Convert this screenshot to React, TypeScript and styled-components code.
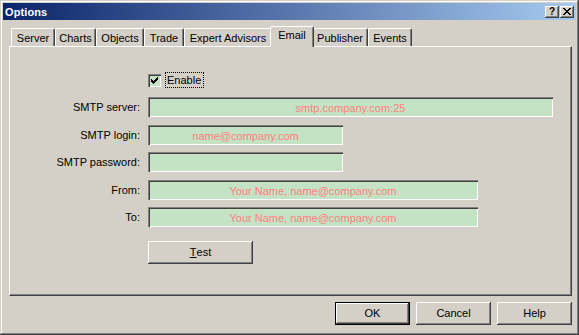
import { Fragment } from 'react';
import styled, { createGlobalStyle } from 'styled-components';

const FACE = '#d4d0c8';
const SHADOW = '#808080';
const DARK = '#404040';
const FIELD = '#c4e2c4';
const HINT = '#ff8080';

const GlobalStyle = createGlobalStyle`
  html, body {
    margin: 0;
    padding: 0;
    background: ${FACE};
  }
  body {
    font-family: 'Liberation Sans', Arial, sans-serif;
    font-size: 11px;
    color: #000;
  }
`;

const ScWindow = styled.div`
  width: 579px;
  height: 335px;
  box-sizing: border-box;
  padding: 3px;
  background: ${FACE};
  box-shadow: inset -1px -1px ${DARK}, inset 1px 1px ${FACE}, inset -2px -2px ${SHADOW},
    inset 2px 2px #fff;
  display: flex;
  flex-direction: column;
`;

const ScTitleBar = styled.div`
  height: 17px;
  flex: 0 0 auto;
  display: flex;
  align-items: center;
  padding: 0 2px 0 2px;
  background: linear-gradient(to right, #0a246a, #a6caf0);
`;

const ScTitle = styled.span`
  flex: 1;
  color: #fff;
  font-weight: bold;
  font-size: 11px;
  letter-spacing: 0.1px;
`;

const ScCaptionButtons = styled.div`
  display: flex;
  gap: 1px;
`;

const ScCaptionBtn = styled.div`
  width: 14px;
  height: 12px;
  box-sizing: border-box;
  background: ${FACE};
  box-shadow: inset -1px -1px ${DARK}, inset 1px 1px #fff, inset -2px -2px ${SHADOW};
  display: flex;
  align-items: center;
  justify-content: center;
  font-weight: bold;
  font-size: 10px;
  line-height: 1;

  svg {
    display: block;
    shape-rendering: crispEdges;
  }
`;

const ScBody = styled.div`
  flex: 1;
  display: flex;
  flex-direction: column;
  padding: 6px 4px 0 6px;
`;

const ScTabStrip = styled.div`
  display: flex;
  align-items: flex-end;
  height: 20px;
  padding-left: 2px;
  position: relative;
  z-index: 1;
`;

const ScTab = styled.div<{ $w: number; $active?: boolean }>`
  box-sizing: border-box;
  width: ${(p) => (p.$active ? p.$w + 4 : p.$w)}px;
  height: ${(p) => (p.$active ? 21 : 18)}px;
  margin: ${(p) => (p.$active ? '0 -2px -1px -2px' : '0')};
  position: relative;
  z-index: ${(p) => (p.$active ? 2 : 1)};
  background: ${FACE};
  border-top: 1px solid #fff;
  border-left: 1px solid #fff;
  border-right: 1px solid ${DARK};
  border-radius: 2px 2px 0 0;
  box-shadow: inset -1px 0 ${SHADOW};
  display: flex;
  justify-content: center;
  padding-top: ${(p) => (p.$active ? 2 : 3)}px;
  white-space: nowrap;
`;

const ScPanel = styled.div`
  height: 250px;
  box-sizing: border-box;
  border-top: 1px solid #fff;
  border-left: 1px solid #fff;
  border-right: 1px solid ${DARK};
  border-bottom: 1px solid ${DARK};
  box-shadow: inset -1px -1px ${SHADOW};
  padding-top: 25px;
  display: flex;
  flex-direction: column;
`;

const ScGrid = styled.div<{ $gap?: number; $top?: number }>`
  display: grid;
  grid-template-columns: 130px auto;
  column-gap: 8px;
  row-gap: ${(p) => p.$gap ?? 0}px;
  align-items: center;
  justify-items: start;
  margin-top: ${(p) => p.$top ?? 0}px;
`;

const ScLabel = styled.label`
  justify-self: end;
  white-space: nowrap;
`;

const ScCheckRow = styled.label`
  grid-column: 2;
  display: flex;
  align-items: center;
  gap: 4px;
  height: 16px;
`;

const ScCheckBox = styled.span`
  width: 13px;
  height: 13px;
  box-sizing: border-box;
  background: ${FIELD};
  box-shadow: inset 1px 1px ${SHADOW}, inset 2px 2px ${DARK}, inset -1px -1px #fff;
  display: flex;
  align-items: center;
  justify-content: center;

  svg {
    display: block;
    shape-rendering: crispEdges;
  }
`;

const ScFocusText = styled.span`
  border: 1px dotted #000;
  padding: 1px 2px 1px 1px;
  line-height: 12px;
`;

const ScField = styled.input<{ $w: number }>`
  width: ${(p) => p.$w}px;
  height: 20px;
  box-sizing: border-box;
  border: none;
  outline: none;
  padding: 2px 2px 0 2px;
  margin: 0;
  background: ${FIELD};
  box-shadow: inset 1px 1px ${SHADOW}, inset 2px 2px ${DARK}, inset -1px -1px #fff;
  font-family: 'Liberation Sans', Arial, sans-serif;
  font-size: 11px;
  text-align: center;
  color: ${HINT};

  &::placeholder {
    color: ${HINT};
    opacity: 1;
  }
`;

const ScButton = styled.button<{ $w: number; $default?: boolean }>`
  width: ${(p) => p.$w}px;
  height: 23px;
  box-sizing: border-box;
  margin: 0;
  padding: 0;
  background: ${FACE};
  border: ${(p) => (p.$default ? '1px solid #000' : 'none')};
  box-shadow: inset -1px -1px ${DARK}, inset 1px 1px #fff, inset -2px -2px ${SHADOW};
  font-family: 'Liberation Sans', Arial, sans-serif;
  font-size: 11px;
  color: #000;
  display: flex;
  align-items: center;
  justify-content: center;
  padding-bottom: 1px;
`;

const ScFooter = styled.div`
  display: flex;
  justify-content: flex-end;
  gap: 6px;
  margin-top: 6px;
`;

const tabs = [
  { label: 'Server', w: 44 },
  { label: 'Charts', w: 41 },
  { label: 'Objects', w: 48 },
  { label: 'Trade', w: 40 },
  { label: 'Expert Advisors', w: 88 },
  { label: 'Email', w: 40, active: true },
  { label: 'Publisher', w: 56 },
  { label: 'Events', w: 44 },
];

const fields = [
  { label: 'SMTP server:', hint: 'smtp.company.com:25', w: 405 },
  { label: 'SMTP login:', hint: 'name@company.com', w: 195 },
  { label: 'SMTP password:', hint: '', w: 195 },
  { label: 'From:', hint: 'Your Name, name@company.com', w: 330 },
  { label: 'To:', hint: 'Your Name, name@company.com', w: 330 },
];

// classic 7x7 check glyph, one 3px column per x
const CheckMark = () => (
  <svg width='7' height='7' viewBox='0 0 7 7'>
    <path
      d='M0 2h1v3h-1zM1 3h1v3h-1zM2 4h1v3h-1zM3 3h1v3h-1zM4 2h1v3h-1zM5 1h1v3h-1zM6 0h1v3h-1z'
      fill='#000'
    />
  </svg>
);

const CloseGlyph = () => (
  <svg width='8' height='7' viewBox='0 0 8 7'>
    <path
      d='M0 0h2v1h-2zM6 0h2v1h-2zM1 1h2v1h-2zM5 1h2v1h-2zM2 2h4v1h-4zM3 3h2v1h-2zM2 4h4v1h-4zM1 5h2v1h-2zM5 5h2v1h-2zM0 6h2v1h-2zM6 6h2v1h-2z'
      fill='#000'
    />
  </svg>
);

function App() {
  return (
    <>
      <GlobalStyle />
      <ScWindow>
        <ScTitleBar>
          <ScTitle>Options</ScTitle>
          <ScCaptionButtons>
            <ScCaptionBtn>?</ScCaptionBtn>
            <ScCaptionBtn>
              <CloseGlyph />
            </ScCaptionBtn>
          </ScCaptionButtons>
        </ScTitleBar>

        <ScBody>
          <ScTabStrip>
            {tabs.map((t) => (
              <ScTab key={t.label} $w={t.w} $active={t.active}>
                {t.label}
              </ScTab>
            ))}
          </ScTabStrip>

          <ScPanel>
            <ScGrid>
              <ScCheckRow>
                <ScCheckBox>
                  <CheckMark />
                </ScCheckBox>
                <ScFocusText>Enable</ScFocusText>
              </ScCheckRow>
            </ScGrid>

            <ScGrid $gap={7.5} $top={9}>
              {fields.map((f) => (
                <Fragment key={f.label}>
                  <ScLabel>{f.label}</ScLabel>
                  <ScField $w={f.w} placeholder={f.hint} readOnly />
                </Fragment>
              ))}
            </ScGrid>

            <ScGrid $top={14}>
              <span />
              <ScButton $w={105}>
                <u>T</u>est
              </ScButton>
            </ScGrid>
          </ScPanel>

          <ScFooter>
            <ScButton $w={75} $default>
              OK
            </ScButton>
            <ScButton $w={75}>Cancel</ScButton>
            <ScButton $w={75}>Help</ScButton>
          </ScFooter>
        </ScBody>
      </ScWindow>
    </>
  );
}

export default App;
